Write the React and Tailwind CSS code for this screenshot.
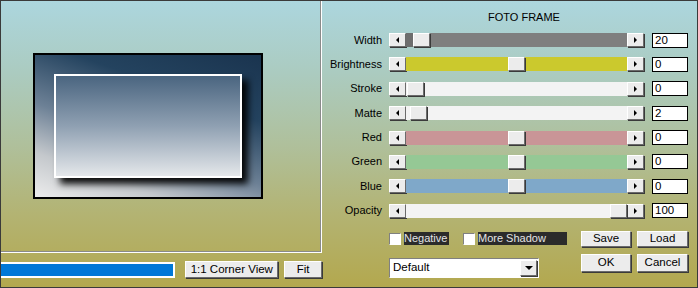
import React from 'react';

const btn = 'flex items-center justify-center bg-[#ececec] border border-t-white border-l-white border-r-[#6b6b6b] border-b-[#6b6b6b] shadow-[1px_1px_0_#3a3a3a] text-[11.5px] text-black';

function LeftTri(){
  return <div className="w-0 h-0 border-y-[3px] border-y-transparent border-r-[3px] border-r-black" />;
}
function RightTri(){
  return <div className="w-0 h-0 border-y-[3px] border-y-transparent border-l-[3px] border-l-black" />;
}

function Slider({ label, value, pos, track, pre }){
  return (
    <div className="flex items-center h-[14px]">
      <div className="w-[60px] text-right text-[11px] leading-none text-black">{label}</div>
      <div className="ml-[7px] w-[255px] h-[14px] flex">
        <div className={'w-[17px] h-[14px] ' + btn}><LeftTri /></div>
        <div className={'relative flex-1 h-[14px] ' + track}>
          {pre && <div className={'absolute left-0 top-0 h-full ' + pre} style={{ width: pos }} />}
          <div className={'absolute top-0 w-[17px] h-[14px] ' + btn} style={{ left: pos }} />
        </div>
        <div className={'w-[17px] h-[14px] ' + btn}><RightTri /></div>
      </div>
      <div className="ml-[8px] w-[36px] h-[15px] bg-white border border-black text-[11.5px] leading-[13px] pl-[2px] text-black">{value}</div>
    </div>
  );
}

function Check({ label, w }){
  return (
    <div className="flex items-center">
      <div className="w-[12px] h-[12px] bg-white border border-t-[#808080] border-l-[#808080] border-b-white border-r-white" />
      <div className={'ml-[3px] h-[13px] bg-[#2b2b2b] text-[#e4e4e4] text-[11px] leading-[13px] ' + w}>{label}</div>
    </div>
  );
}

export default function App(){
  const rows = [
    { label: 'Width', value: '20', pos: 7, track: 'bg-[#7f7f7f]', pre: 'bg-[#6e6e6e]' },
    { label: 'Brightness', value: '0', pos: 102, track: 'bg-[#cbc92d]' },
    { label: 'Stroke', value: '0', pos: 1, track: 'bg-[#f3f3f3]' },
    { label: 'Matte', value: '2', pos: 4, track: 'bg-[#f3f3f3]' },
    { label: 'Red', value: '0', pos: 102, track: 'bg-[#c99597]' },
    { label: 'Green', value: '0', pos: 102, track: 'bg-[#95c895]' },
    { label: 'Blue', value: '0', pos: 102, track: 'bg-[#7fa8c9]' },
    { label: 'Opacity', value: '100', pos: 204, track: 'bg-[#f3f3f3]' },
  ];
  return (
    <div className="w-[698px] h-[288px] flex border border-[#3a3a3a] font-['Liberation_Sans',Arial,sans-serif] bg-[linear-gradient(to_bottom,#acd6de_0%,#abcbc0_25%,#afc09c_50%,#b3b372_75%,#b3a84e_100%)] overflow-hidden">
      <div className="w-[321px] flex flex-col shrink-0">
        <div className="h-[252px] border-r border-b border-white">
          <div className="h-full border-r border-b border-[#8a8a8a] pl-[32px] pt-[52px]">
            <div className="w-[230px] h-[146px] border-2 border-black p-[19px] bg-[linear-gradient(200deg,#1a344f_0%,#24435f_30%,#6d8196_58%,#c4c8cc_80%,#ececec_100%)]">
              <div className="w-full h-full border-2 border-white bg-[linear-gradient(to_bottom,#4a6580_0%,#8fa0b2_50%,#e4e7ea_100%)] shadow-[6px_6px_7px_rgba(0,0,0,0.95)]" />
            </div>
          </div>
        </div>
        <div className="flex items-start mt-[8px]">
          <div className="w-[175px] h-[16px] border-2 border-l-0 border-white bg-[#0078d7] mt-[1px]" />
          <div className={'ml-[10px] w-[93px] h-[17px] ' + btn}>1:1 Corner View</div>
          <div className={'ml-[6px] w-[38px] h-[17px] ' + btn}>Fit</div>
        </div>
      </div>
      <div className="flex-1 flex flex-col">
        <div className="pt-[9px] pl-[166px] text-[11px] leading-[14px] text-black">FOTO FRAME</div>
        <div className="mt-[9px] flex flex-col gap-[10.4px]">
          {rows.map(r => <Slider key={r.label} {...r} />)}
        </div>
        <div className="mt-[13px] pl-[67px] flex">
          <div className="w-[192px] flex flex-col">
            <div className="h-[16px] flex items-center gap-[14px]">
              <Check label="Negative" w="w-[45px]" />
              <Check label="More Shadow" w="w-[89px]" />
            </div>
            <div className="mt-[11px] w-[150px] h-[20px] bg-white border border-t-[#808080] border-l-[#808080] border-b-white border-r-white flex items-center p-[1px]">
              <div className="flex-1 text-[11.5px] leading-none pl-[2px] text-black">Default</div>
              <div className={'w-[17px] h-[16px] ' + btn}>
                <div className="w-0 h-0 border-x-[4px] border-x-transparent border-t-[4px] border-t-black" />
              </div>
            </div>
          </div>
          <div className="flex flex-col">
            <div className="flex gap-[6px]">
              <div className={'w-[50px] h-[16px] ' + btn}>Save</div>
              <div className={'w-[51px] h-[16px] ' + btn}>Load</div>
            </div>
            <div className="flex gap-[6px] mt-[7px]">
              <div className={'w-[50px] h-[18px] ' + btn}>OK</div>
              <div className={'w-[51px] h-[18px] ' + btn}>Cancel</div>
            </div>
          </div>
        </div>
      </div>
    </div>
  );
}
